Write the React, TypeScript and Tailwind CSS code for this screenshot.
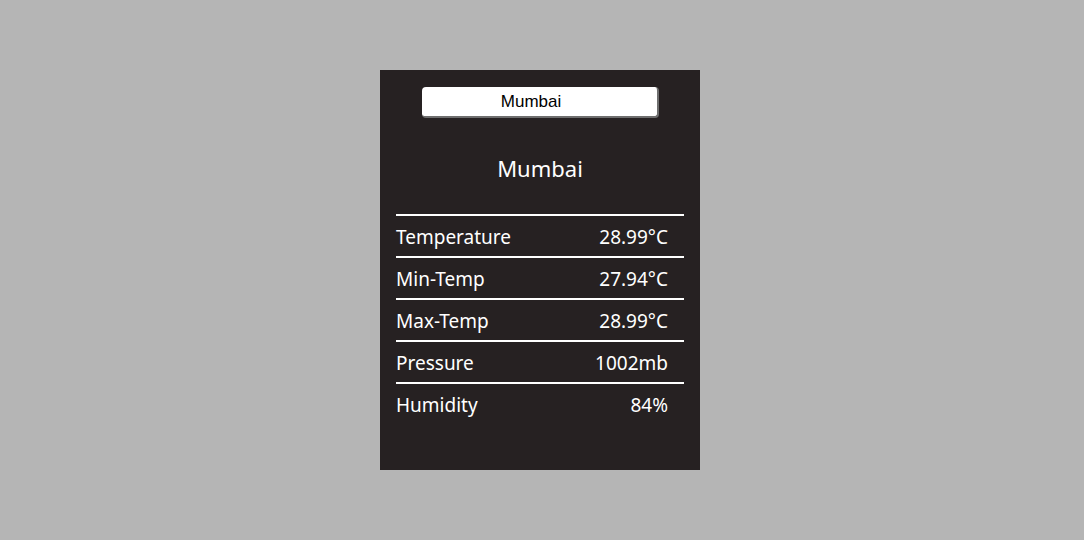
import { useState } from "react";

const rows = [
  { label: "Temperature", value: "28.99°C" },
  { label: "Min-Temp", value: "27.94°C" },
  { label: "Max-Temp", value: "28.99°C" },
  { label: "Pressure", value: "1002mb" },
  { label: "Humidity", value: "84%" },
];

export default function App() {
  const [city, setCity] = useState("Mumbai");

  return (
    <div className="min-h-[540px] w-full bg-[#b5b5b5] flex justify-center pt-[70px] pr-1">
      <div className="w-[320px] h-[400px] bg-[#262122] text-white pt-[17px] font-['Noto_Sans',sans-serif]">
        <div className="flex justify-center">
          <input
            value={city}
            onChange={(e) => setCity(e.target.value)}
            className="w-[237px] h-[31px] bg-white rounded-[4px] text-black text-center text-[17px] font-['Liberation_Sans',Arial,sans-serif] outline-none border-r-2 border-b-2 border-[#6e6e6e] pr-4"
          />
        </div>
        <h2 className="text-center text-[22px] mt-[35px] leading-[30px]">{city}</h2>
        <div className="mx-4 mt-[31px]">
          {rows.map((r) => (
            <div
              key={r.label}
              className="flex justify-between items-center h-[42px] border-t-2 border-white text-[19px] pr-4 pt-[3px]"
            >
              <span>{r.label}</span>
              <span>{r.value}</span>
            </div>
          ))}
        </div>
      </div>
    </div>
  );
}
